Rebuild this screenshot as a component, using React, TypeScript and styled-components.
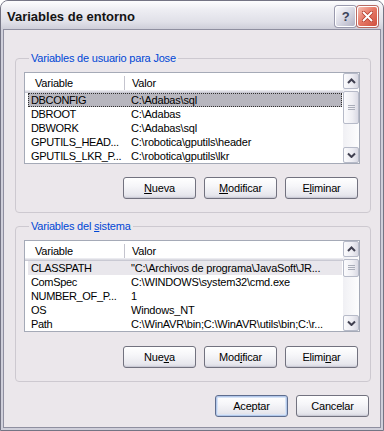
import React from "react";
import styled, { createGlobalStyle } from "styled-components";

const GlobalStyle = createGlobalStyle`
  html, body {
    margin: 0;
    padding: 0;
    background: #ffffff;
  }
  body {
    font-family: "Liberation Sans", Arial, sans-serif;
    font-size: 11px;
    letter-spacing: -0.2px;
    color: #000;
  }
  * {
    box-sizing: border-box;
  }
`;

type Row = { name: string; value: string };

const userVars: Row[] = [
  { name: "DBCONFIG", value: "C:\\Adabas\\sql" },
  { name: "DBROOT", value: "C:\\Adabas" },
  { name: "DBWORK", value: "C:\\Adabas\\sql" },
  { name: "GPUTILS_HEAD...", value: "C:\\robotica\\gputils\\header" },
  { name: "GPUTILS_LKR_P...", value: "C:\\robotica\\gputils\\lkr" },
];

const systemVars: Row[] = [
  { name: "CLASSPATH", value: '"C:\\Archivos de programa\\JavaSoft\\JR...' },
  { name: "ComSpec", value: "C:\\WINDOWS\\system32\\cmd.exe" },
  { name: "NUMBER_OF_P...", value: "1" },
  { name: "OS", value: "Windows_NT" },
  { name: "Path", value: "C:\\WinAVR\\bin;C:\\WinAVR\\utils\\bin;C:\\r..." },
];

type Selection = "focus" | "inactive";

function Arrow({ down }: { down?: boolean }) {
  return (
    <svg width="9" height="6" viewBox="0 0 9 6">
      <polyline
        points={down ? "1,1.5 4.5,5 8,1.5" : "1,5 4.5,1.5 8,5"}
        fill="none"
        stroke="#404050"
        strokeWidth="2"
      />
    </svg>
  );
}

function Grip() {
  return (
    <svg width="7" height="6" viewBox="0 0 7 6">
      <path d="M0 0.5h7M0 2.5h7M0 4.5h7" stroke="#a9adb9" strokeWidth="1" />
    </svg>
  );
}

function VarList({
  rows,
  selection,
  thumbHeight,
}: {
  rows: Row[];
  selection: Selection;
  thumbHeight: number;
}) {
  return (
    <List>
      <ListContent>
        <Header>
          <HeaderCell $first>Variable</HeaderCell>
          <HeaderSep />
          <HeaderCell>Valor</HeaderCell>
        </Header>
        <Rows>
          {rows.map((row, i) => (
            <ListRow key={row.name} $selected={i === 0 ? selection : undefined}>
              <NameCell>{row.name}</NameCell>
              <ValueCell>{row.value}</ValueCell>
            </ListRow>
          ))}
        </Rows>
      </ListContent>
      <ScrollBar>
        <ScrollButton>
          <Arrow />
        </ScrollButton>
        <Track>
          <Thumb style={{ height: thumbHeight }}>
            <Grip />
          </Thumb>
        </Track>
        <ScrollButton>
          <Arrow down />
        </ScrollButton>
      </ScrollBar>
    </List>
  );
}

export default function App() {
  return (
    <>
      <GlobalStyle />
      <Window>
        <TitleBar>
          <Title>Variables de entorno</Title>
          <CaptionButton>
            <HelpMark>?</HelpMark>
          </CaptionButton>
          <CaptionButton $close>
            <svg width="11" height="11" viewBox="0 0 11 11">
              <path d="M1.5 1.5L9.5 9.5M9.5 1.5L1.5 9.5" stroke="#b23a2a" strokeWidth="3.6" strokeLinecap="round" />
              <path d="M1.5 1.5L9.5 9.5M9.5 1.5L1.5 9.5" stroke="#ffffff" strokeWidth="2" strokeLinecap="round" />
            </svg>
          </CaptionButton>
        </TitleBar>
        <Body>
          <Group>
            <Legend>Variables de usuario para Jose</Legend>
            <VarList rows={userVars} selection="focus" thumbHeight={33} />
            <ButtonRow $top={13}>
              <Button>
                <u>N</u>ueva
              </Button>
              <Button>
                <u>M</u>odificar
              </Button>
              <Button>
                E<u>l</u>iminar
              </Button>
            </ButtonRow>
          </Group>
          <Group $second>
            <Legend>
              Variables del <u>s</u>istema
            </Legend>
            <VarList rows={systemVars} selection="inactive" thumbHeight={18} />
            <ButtonRow $top={14}>
              <Button>
                Nue<u>v</u>a
              </Button>
              <Button>
                Mod<u>i</u>ficar
              </Button>
              <Button>
                Elimi<u>n</u>ar
              </Button>
            </ButtonRow>
          </Group>
          <ButtonRow $top={13}>
            <Button $default>Aceptar</Button>
            <Button>Cancelar</Button>
          </ButtonRow>
        </Body>
      </Window>
    </>
  );
}

const Window = styled.div`
  width: 384px;
  height: 431px;
  display: flex;
  flex-direction: column;
  border: 1px solid #747484;
  border-radius: 8px 8px 0 0;
  background: #cfcfda;
  overflow: hidden;
`;

const TitleBar = styled.div`
  height: 28px;
  flex: none;
  display: flex;
  align-items: center;
  padding: 2px 5px 0 6px;
  background: linear-gradient(#fdfdfe 0%, #eeeef3 30%, #e0e0e8 75%, #ceced9 100%);
`;

const Title = styled.div`
  flex: 1;
  font: bold 13px "Liberation Sans", Arial, sans-serif;
  letter-spacing: 0;
  color: #141414;
  padding-top: 1px;
`;

const CaptionButton = styled.div<{ $close?: boolean }>`
  width: 21px;
  height: 21px;
  margin-left: 1px;
  border: 1px solid #ffffff;
  border-radius: 3px;
  display: flex;
  align-items: center;
  justify-content: center;
  box-shadow: 0 0 0 1px ${(p) => (p.$close ? "#b76a62" : "#9a9aae")};
  background: ${(p) =>
    p.$close
      ? "linear-gradient(135deg, #f7c0b4 0%, #e77b69 45%, #cf4f3d 100%)"
      : "linear-gradient(135deg, #fafafd 0%, #d9d9e4 50%, #b2b2c4 100%)"};
`;

const HelpMark = styled.span`
  font: bold 13px "Liberation Sans", Arial, sans-serif;
  color: #3b4258;
  line-height: 1;
`;

const Body = styled.div`
  flex: 1;
  margin: 0 2px 2px;
  border: 1px solid #8f8fa0;
  background: #ebe7eb;
  padding: 21px 9px 0 11px;
  display: flex;
  flex-direction: column;
`;

const Group = styled.fieldset<{ $second?: boolean }>`
  margin: ${(p) => (p.$second ? "6px 0 0" : "0")};
  padding: 7px 10px 13px 8px;
  border: 1px solid #cdc9d0;
  border-radius: 4px;
  min-width: 0;
`;

const Legend = styled.legend`
  color: #0046d5;
  padding: 0 2px;
  margin-left: 5px;
  line-height: 14px;
`;

const List = styled.div`
  height: 92px;
  border: 1px solid #a5aab7;
  background: #ffffff;
  display: flex;
`;

const ListContent = styled.div`
  flex: 1;
  min-width: 0;
  overflow: hidden;
  display: flex;
  flex-direction: column;
`;

const Header = styled.div`
  height: 20px;
  flex: none;
  display: flex;
  align-items: center;
  background: #ffffff;
  box-shadow: inset 0 -1px 0 #c9c9d3, inset 0 -2px 0 #dcdce3, inset 0 -3px 0 #ebebf0;
  padding-bottom: 1px;
`;

const HeaderCell = styled.div<{ $first?: boolean }>`
  width: ${(p) => (p.$first ? "99px" : "auto")};
  padding-left: ${(p) => (p.$first ? "10px" : "7px")};
  white-space: nowrap;
`;

const HeaderSep = styled.div`
  width: 1px;
  height: 14px;
  background: #c4c4ce;
  box-shadow: 1px 0 0 #ffffff;
`;

const Rows = styled.div`
  padding: 0 1px 0 3px;
`;

const ListRow = styled.div<{ $selected?: Selection }>`
  height: 14px;
  display: flex;
  align-items: center;
  white-space: nowrap;
  background: ${(p) =>
    p.$selected === "focus" ? "#b7b6be" : p.$selected === "inactive" ? "#e9e7ec" : "transparent"};
  outline: ${(p) => (p.$selected === "focus" ? "1px dotted #303030" : "none")};
  outline-offset: -1px;
`;

const NameCell = styled.div`
  width: 96px;
  flex: none;
  padding-left: 3px;
  letter-spacing: -0.35px;
  overflow: hidden;
`;

const ValueCell = styled.div`
  flex: 1;
  min-width: 0;
  padding-left: 7px;
  overflow: hidden;
`;

const ScrollBar = styled.div`
  width: 16px;
  flex: none;
  display: flex;
  flex-direction: column;
  background: linear-gradient(90deg, #f0f0f4, #fdfdfe);
`;

const ScrollButton = styled.div`
  height: 16px;
  flex: none;
  border: 1px solid #b6bac8;
  border-radius: 2px;
  display: flex;
  align-items: center;
  justify-content: center;
  background: linear-gradient(90deg, #fbfbfd 0%, #ececf2 60%, #d8d8e2 100%);
`;

const Track = styled.div`
  flex: 1;
  display: flex;
  flex-direction: column;
  padding-top: 2px;
`;

const Thumb = styled.div`
  flex: none;
  border: 1px solid #b6bac8;
  border-radius: 2px;
  display: flex;
  align-items: center;
  justify-content: center;
  background: linear-gradient(90deg, #fbfbfd 0%, #eeeef3 60%, #dadae4 100%);
`;

const ButtonRow = styled.div<{ $top: number }>`
  display: flex;
  justify-content: flex-end;
  gap: 8px;
  margin-top: ${(p) => p.$top}px;
  padding-right: 2px;
`;

const Button = styled.button<{ $default?: boolean }>`
  width: 73px;
  height: 22px;
  padding: 0;
  border: 1px solid ${(p) => (p.$default ? "#5e6d8e" : "#72727f")};
  border-radius: 3px;
  font: 11px "Liberation Sans", Arial, sans-serif;
  letter-spacing: -0.2px;
  color: #000;
  background: linear-gradient(#ffffff 0%, #f6f6f9 40%, #e7e7ed 85%, #d6d6e0 100%);
  box-shadow: ${(p) =>
    p.$default
      ? "inset 0 0 0 1px #b3c8ea, inset 0 0 0 2px #d8e4f6"
      : "inset 0 -1px 0 #cacad5"};
  u {
    text-decoration: underline;
  }
`;
